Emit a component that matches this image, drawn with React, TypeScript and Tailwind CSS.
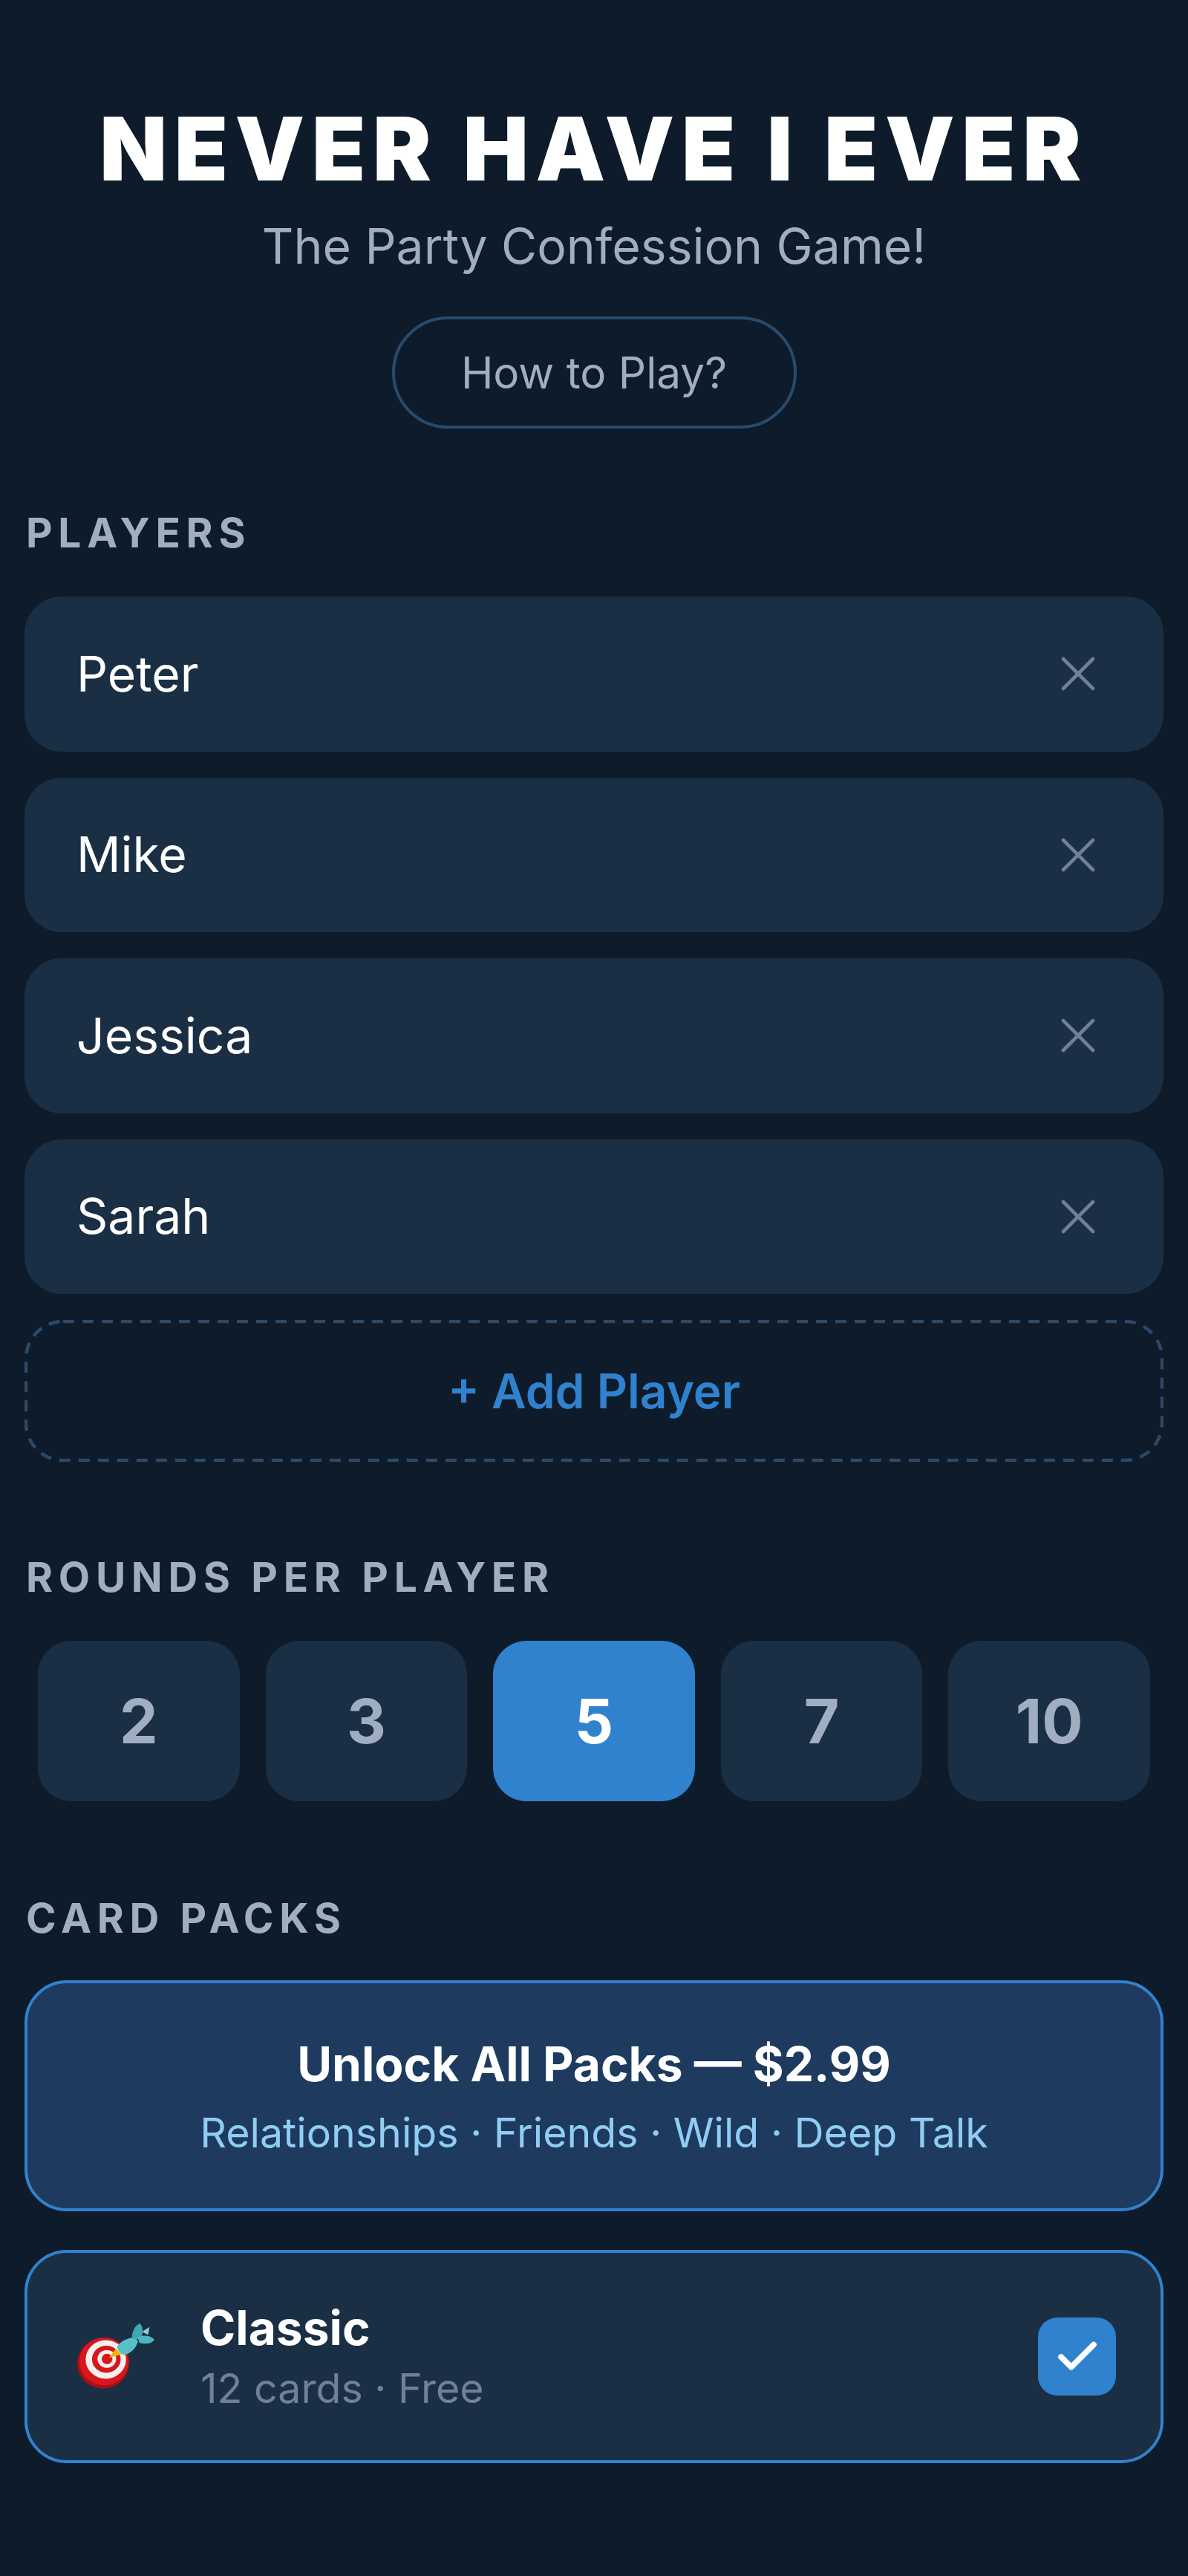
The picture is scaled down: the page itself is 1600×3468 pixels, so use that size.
import { X, Check } from 'lucide-react'

const players = ['Peter', 'Mike', 'Jessica', 'Sarah']
const rounds = [2, 3, 5, 7, 10]

function SectionLabel({ children }: { children: string }) {
  return (
    <h2 className="pl-[2px] text-[55px] leading-[66px] font-bold tracking-[7.7px] text-[#a0aec0] uppercase">
      {children}
    </h2>
  )
}

function DartIcon() {
  return (
    <svg viewBox="300 400 340 280" className="w-[113px] h-[93px] shrink-0">
      <ellipse cx="420" cy="568" rx="105" ry="102" fill="#a80f14" />
      <ellipse cx="424" cy="560" rx="100" ry="97" fill="#d9161c" />
      <ellipse cx="431" cy="552" rx="82" ry="78" fill="#f4f1ee" />
      <ellipse cx="433" cy="551" rx="58" ry="55" fill="#d9161c" />
      <ellipse cx="435" cy="550" rx="38" ry="36" fill="#f4f1ee" />
      <ellipse cx="436" cy="550" rx="22" ry="21" fill="#d9161c" />
      <path d="M444 545 L472 508 L494 532 Z" fill="#f2b705" />
      <path d="M476 500 Q498 468 548 462 L562 478 Q548 522 506 534 Q484 530 476 500 Z" fill="#58c0c9" />
      <path d="M536 466 Q538 420 568 405 Q590 425 572 472 Z" fill="#3fa7b0" />
      <path d="M562 460 Q606 448 628 472 Q610 496 566 484 Z" fill="#4cb4bd" />
      <path d="M578 440 L608 420 L602 452 Z" fill="#8fd0d6" />
    </svg>
  )
}

export default function App() {
  return (
    <div className="min-h-[3468px] bg-[#0d1b2a] px-[33px] font-['Inter','Noto_Sans',sans-serif]">
      <header className="flex flex-col items-center pt-[130px]">
        <h1 className="text-[118px] leading-[140px] font-black tracking-[9.6px] text-white">
          NEVER HAVE I EVER
        </h1>
        <p className="mt-[19px] text-[66px] leading-[84px] text-[#a0aec0]">The Party Confession Game!</p>
        <button className="mt-[53px] flex h-[151px] w-[545px] items-center justify-center rounded-full border-[4.5px] border-[#2a4a6b] text-[58.5px] text-[#a0aec0]">
          How to Play?
        </button>
      </header>

      <section className="mt-[107px]">
        <SectionLabel>Players</SectionLabel>
        <div className="mt-[53px] flex flex-col gap-[35px]">
          {players.map((name) => (
            <div
              key={name}
              className="flex h-[208.5px] items-center justify-between rounded-[50px] bg-[#1a2e44] pl-[70px] pr-[75px]"
            >
              <span className="text-[66px] text-white">{name}</span>
              <X className="h-[80px] w-[80px] text-[#718096]" strokeWidth={1.4} />
            </div>
          ))}
          <button className="relative flex h-[191px] items-center justify-center text-[64px] font-semibold text-[#3182ce]">
            <svg viewBox="0 0 1534 191" className="absolute inset-0 h-full w-full">
              <rect
                x="2"
                y="2"
                width="1530"
                height="187"
                rx="50"
                fill="none"
                stroke="#2a4a6b"
                strokeWidth="4.5"
                strokeDasharray="15 11"
              />
            </svg>
            + Add Player
          </button>
        </div>
      </section>

      <section className="mt-[122px]">
        <SectionLabel>Rounds per player</SectionLabel>
        <div className="mt-[53px] flex justify-center gap-[35px] px-[18px]">
          {rounds.map((n) => (
            <button
              key={n}
              className={
                n === 5
                  ? 'h-[216px] flex-1 rounded-[45px] bg-[#3182ce] text-[82px] font-bold text-white'
                  : 'h-[216px] flex-1 rounded-[45px] bg-[#1a2e44] text-[82px] font-bold text-[#a0aec0]'
              }
            >
              {n}
            </button>
          ))}
        </div>
      </section>

      <section className="mt-[124px]">
        <SectionLabel>Card packs</SectionLabel>
        <div className="mt-[51px] flex flex-col gap-[52px]">
          <div className="flex h-[311px] flex-col items-center justify-center rounded-[57px] border-[4.5px] border-[#3182ce] bg-[#1e3a5f]">
            <div className="text-[64px] font-bold text-white">Unlock All Packs — $2.99</div>
            <div className="mt-[2px] text-[55.5px] text-[#90cdf4]">Relationships · Friends · Wild · Deep Talk</div>
          </div>
          <div className="flex h-[287px] items-center rounded-[57px] border-[4.5px] border-[#3182ce] bg-[#1a2e44] pl-[62px] pr-[60px]">
            <DartIcon />
            <div className="ml-[58px] flex-1">
              <div className="text-[64px] leading-[82px] font-bold text-white">Classic</div>
              <div className="mt-[3px] text-[55.5px] leading-[74px] text-[#718096]">12 cards · Free</div>
            </div>
            <div className="flex h-[105px] w-[105px] items-center justify-center rounded-[26px] bg-[#3182ce]">
              <Check className="h-[66px] w-[66px] text-white" strokeWidth={2.8} />
            </div>
          </div>
        </div>
      </section>
    </div>
  )
}
